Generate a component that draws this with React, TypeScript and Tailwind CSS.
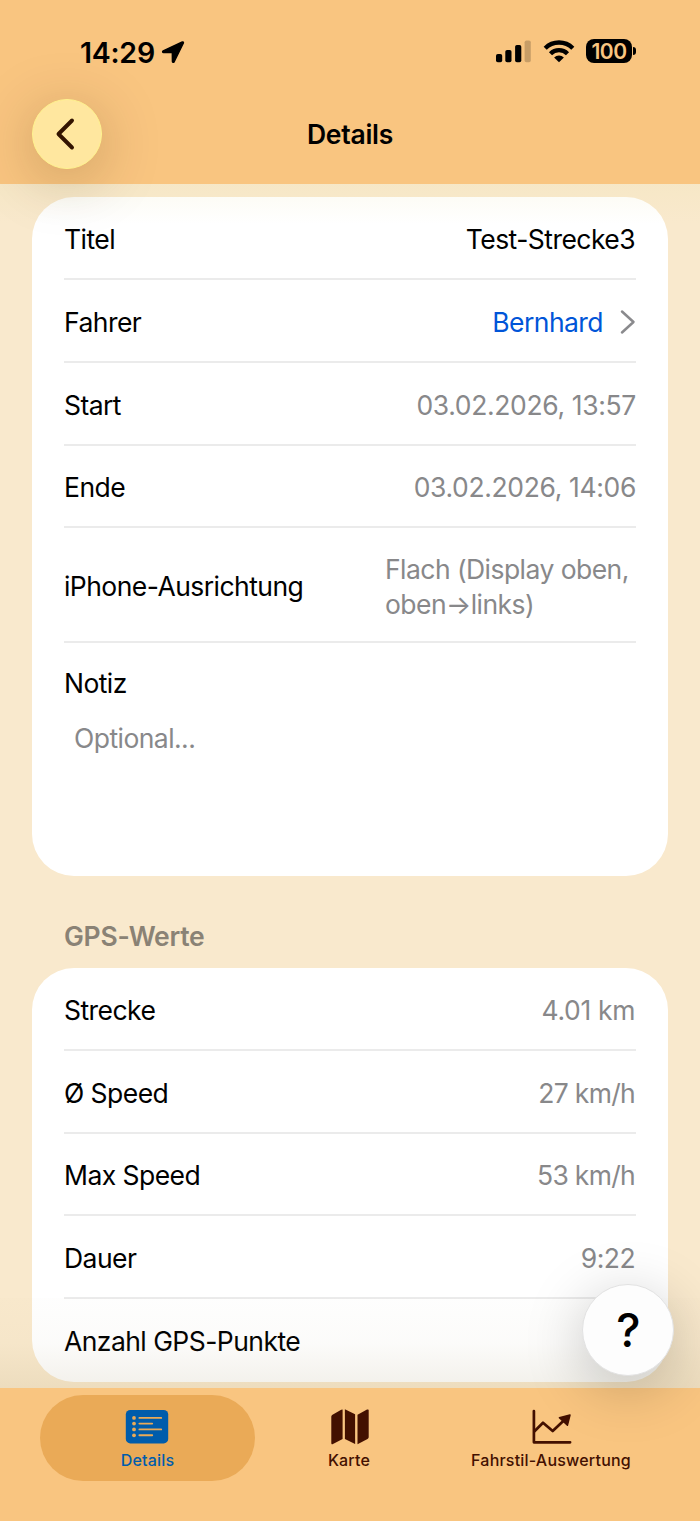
import React from 'react';

interface RowProps {
    label: string;
    className?: string;
    last?: boolean;
    children?: React.ReactNode;
}

const Row: React.FC<RowProps> = ({ label, className = 'h-[83px]', last, children }) => (
    <div className={`flex items-center justify-between ${last ? 'pt-[2px]' : 'border-b-2 border-[#ebebeb] pt-1'} ${className}`}>
        <span className="whitespace-nowrap">{label}</span>
        {children}
    </div>
);

const StatusBar: React.FC = () => (
    <div className="flex h-[104px] items-start justify-between pl-20 pr-[64px] pt-[34px] text-black">
        <div className="flex h-9 items-center gap-[6px]">
            <span className="pt-px text-[28.5px] font-semibold leading-9 tracking-[-0.25px]">14:29</span>
            <svg width="24" height="24" viewBox="0 0 24 24">
                <path d="M21.3 2 2.2 10.8c-1 .5-.7 1.7.3 1.7l8.8.1.1 8.9c0 1 1.2 1.2 1.7.3L22.4 3c.3-.7-.4-1.3-1.1-1Z" fill="currentColor" stroke="currentColor" strokeWidth="1.4" />
            </svg>
        </div>
        <div className="flex h-[34px] items-center">
            <svg width="35" height="24" viewBox="0 0 35 24">
                <rect x="0" y="15" width="6.2" height="8.3" rx="1.8" />
                <rect x="9.3" y="11" width="6.2" height="12.3" rx="1.8" />
                <rect x="19.1" y="6" width="6.2" height="17.3" rx="1.8" />
                <rect x="28.6" y="1.5" width="6.2" height="21.8" rx="1.8" opacity="0.2" />
            </svg>
            <svg className="ml-[12px]" width="32" height="24" viewBox="0 0 32 24" fill="none" stroke="currentColor" strokeWidth="4.4">
                <path d="M2.2 9.2a19.6 19.6 0 0 1 27.600 0" />
                <path d="M7.5 14.7a12 12 0 0 1 17 0" />
                <path d="M16 23.3l-4.900-4.900a7 7 0 0 1 9.800 0Z" fill="currentColor" stroke="none" />
            </svg>
            <div className="ml-[11px] flex h-6 w-[46px] items-center justify-center rounded-[8px] bg-black pt-px text-[21px] font-semibold leading-6 tracking-[-0.6px] text-[#f9c580]">
                100
            </div>
            <div className="ml-px h-2 w-[3px] rounded-r-full bg-black" />
        </div>
    </div>
);

const tabs = [
    {
        label: 'Details',
        box: 'w-[215px] rounded-[43px] bg-[#eaaa57] text-[#005cab]',
        icon: (
            <svg className="-ml-px" width="44" height="36" viewBox="0 0 44 36">
                <rect x="0.8" y="1" width="42.4" height="33.4" rx="4.5" fill="currentColor" />
                <g stroke="#eaaa57" strokeWidth="1.9" strokeLinecap="round">
                    <path d="M14.4 8.9h21.8M14.4 14.6h12.8M14.4 20.4h21.8M14.4 26.3h12.8" />
                </g>
                <g fill="#eaaa57">
                    <circle cx="9" cy="8.9" r="1.9" />
                    <circle cx="9" cy="14.6" r="1.9" />
                    <circle cx="9" cy="20.4" r="1.9" />
                    <circle cx="9" cy="26.3" r="1.9" />
                </g>
            </svg>
        ),
    },
    {
        label: 'Karte',
        box: 'w-[188px] text-[#431000]',
        icon: (
            <svg width="40" height="36" viewBox="0 0 40 36" fill="currentColor">
                <path d="M13.6 0.5v29.5L4 35c-1 .5-1.7.1-1.7-1V8c0-1.2.3-1.8 1.2-2.3L12.2.7Z" />
                <path d="M15.9.3l10.2 5v29.8L15.9 30Z" />
                <path d="M28.5 5.7L38 .6c1-.5 1.7-.1 1.7 1v26.2c0 1.2-.3 1.7-1.2 2.2L28.5 35.3Z" />
            </svg>
        ),
    },
    {
        label: 'Fahrstil-Auswertung',
        box: 'w-[216px] text-[#431000]',
        icon: (
            <svg width="42" height="36" viewBox="-1 0 42 36" fill="none" stroke="currentColor" strokeWidth="2.7" strokeLinecap="round" strokeLinejoin="round">
                <path d="M2.9 2v31.3h36.2" />
                <path d="M3.5 22.3L12 13.7 21.7 22 32.3 12" />
                <path d="M39 6l-2.6 10.3-8-7.5Z" fill="currentColor" strokeWidth="1.5" />
            </svg>
        ),
    },
];

const App: React.FC = () => {
    return (
        <div className="relative flex h-[1521px] w-[700px] flex-col overflow-hidden bg-[#f9e9cd] font-[Inter,sans-serif] text-[26.5px] tracking-[-0.55px] text-black">
            <header className="relative z-10 h-[184px] shrink-0 bg-[#f9c580]">
                <div className="tracking-normal">
                    <StatusBar />
                </div>
                <div className="relative flex h-[60px] items-center justify-center">
                    <h1 className="pt-[2px] text-[26.5px] font-semibold tracking-[-0.25px]">Details</h1>
                    <button className="absolute left-8 top-[-5px] flex size-[70px] items-center justify-center rounded-full border-[1.5px] border-[#fff38f] bg-[#ffe79f] shadow-[0_10px_60px_rgba(60,40,0,0.26)]">
                        <svg width="24" height="34" viewBox="0 0 24 34" fill="none" stroke="#331400" strokeWidth="3.9" strokeLinecap="round" strokeLinejoin="round">
                            <path d="M17 3.5L3.5 17 17 30.5" />
                        </svg>
                    </button>
                </div>
            </header>

            <main className="relative h-[1204px] shrink-0 overflow-hidden px-8 pt-[13px]">
                <section className="h-[679px] rounded-[42px] bg-white px-8">
                    <Row label="Titel">
                        <span className="pr-px">Test-Strecke3</span>
                    </Row>
                    <Row label="Fahrer">
                        <span className="flex items-center gap-[17px] text-[#0055d8]">
                            Bernhard
                            <svg className="-mt-px" width="16" height="26" viewBox="0 0 16 26" fill="none" stroke="#8a8a8d" strokeWidth="2.5" strokeLinecap="round" strokeLinejoin="round">
                                <path d="M2 2.5L13.5 13 2 23.5" />
                            </svg>
                        </span>
                    </Row>
                    <Row label="Start">
                        <span className="tracking-[-0.35px] text-[#88888a]">03.02.2026, 13:57</span>
                    </Row>
                    <Row label="Ende" className="h-[82px]">
                        <span className="tracking-[-0.35px] text-[#88888a]">03.02.2026, 14:06</span>
                    </Row>
                    <Row label="iPhone-Ausrichtung" className="h-[115px]">
                        <span className="w-[251px] whitespace-nowrap leading-[35px] text-[#88888a]">
                            Flach (Display oben,
                            <br />
                            oben→links)
                        </span>
                    </Row>
                    <div className="pt-[22px] leading-9">
                        <div>Notiz</div>
                        <div className="mt-[19px] pl-[10px] text-[#88888a]">Optional...</div>
                    </div>
                </section>

                <h2 className="mt-[42px] px-8 text-[26.5px] font-semibold leading-9 tracking-[-0.25px] text-[#8a8275]">GPS-Werte</h2>

                <section className="mt-[14px] h-[414px] rounded-[42px] bg-white px-8">
                    <Row label="Strecke">
                        <span className="pr-px tracking-[-0.35px] text-[#88888a]">4.01 km</span>
                    </Row>
                    <Row label="Ø Speed">
                        <span className="pr-px tracking-[-0.7px] text-[#88888a]">27 km/h</span>
                    </Row>
                    <Row label="Max Speed" className="h-[82px]">
                        <span className="pr-px tracking-[-0.7px] text-[#88888a]">53 km/h</span>
                    </Row>
                    <Row label="Dauer">
                        <span className="pr-px text-[#88888a]">9:22</span>
                    </Row>
                    <Row label="Anzahl GPS-Punkte" last />
                </section>

                {/* Soft edges under the bars */}
                <div className="pointer-events-none absolute inset-x-0 top-0 h-10 bg-linear-to-b from-[#e8dfa0]/15 to-transparent" />
                <div className="pointer-events-none absolute inset-x-0 bottom-0 h-[90px] bg-linear-to-b from-[#938250]/1 via-[#938250]/3 to-[#938250]/12" />
            </main>

            <nav className="flex h-[133px] shrink-0 items-start bg-[#f9c580] pl-10 pt-[7px]">
                {tabs.map((tab) => (
                    <button key={tab.label} className={`flex h-[86px] flex-col items-center pt-[14px] ${tab.box}`}>
                        {tab.icon}
                        <span className="mt-[3px] whitespace-nowrap text-[16px] font-medium leading-6 tracking-[0.2px]">{tab.label}</span>
                    </button>
                ))}
            </nav>

            <button className="absolute right-[26px] top-[1284px] flex size-[92px] items-center justify-center rounded-full border border-[#e2e2e2] bg-[#fdfdfd] text-[46px] font-medium leading-none shadow-[0_12px_60px_rgba(0,0,0,0.22)]">
                ?
            </button>
        </div>
    );
};

export default App;
